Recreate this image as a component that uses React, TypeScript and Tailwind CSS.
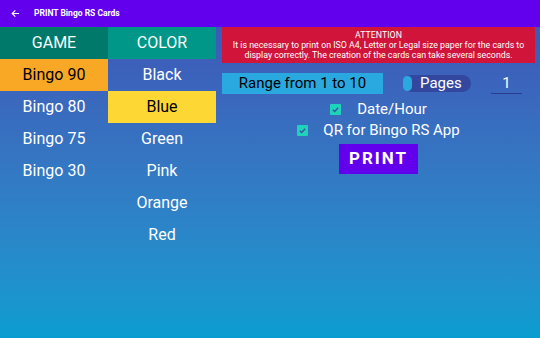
import React from "react";

const games = ["Bingo 90", "Bingo 80", "Bingo 75", "Bingo 30"];
const colors = ["Black", "Blue", "Green", "Pink", "Orange", "Red"];

function Check() {
  return (
    <div className="w-[11px] h-[11px] bg-[#1fd3b9] flex items-center justify-center rounded-[1px]">
      <svg width="9" height="9" viewBox="0 0 10 10">
        <path d="M2 5.2 L4.1 7.2 L8 3" stroke="#3b4fa8" strokeWidth="1.4" fill="none" />
      </svg>
    </div>
  );
}

export default function App() {
  return (
    <div
      className="w-[540px] h-[338px] flex flex-col bg-gradient-to-b from-[#3f51b5] to-[#079dd0] overflow-hidden"
      style={{ fontFamily: "Roboto, 'Noto Sans', sans-serif" }}
    >
      <div className="h-[27px] bg-[#6200ee] flex items-center shrink-0">
        <svg className="ml-[11px]" width="9" height="9" viewBox="0 0 10 10">
          <path d="M9 5 H1.5 M4.8 1.5 L1.3 5 L4.8 8.5" stroke="white" strokeWidth="1.3" fill="none" />
        </svg>
        <span className="ml-[14px] text-white font-bold text-[8.5px] leading-none">PRINT Bingo RS Cards</span>
      </div>
      <div className="flex flex-1">
        <div className="w-[108px] flex flex-col">
          <div className="h-[32px] bg-[#00796b] text-white text-[16px] flex items-center justify-center">GAME</div>
          {games.map((g, i) => (
            <div
              key={g}
              className={
                "h-[32px] text-[16px] flex items-center justify-center " +
                (i === 0 ? "bg-[#f9a825] text-black" : "text-white")
              }
            >
              {g}
            </div>
          ))}
        </div>
        <div className="w-[108px] flex flex-col">
          <div className="h-[32px] bg-[#009688] text-white text-[16px] flex items-center justify-center">COLOR</div>
          {colors.map((c, i) => (
            <div
              key={c}
              className={
                "h-[32px] text-[16px] flex items-center justify-center " +
                (i === 1 ? "bg-[#fdd835] text-black" : "text-white")
              }
            >
              {c}
            </div>
          ))}
        </div>
        <div className="ml-[6px] w-[313px] flex flex-col">
          <div className="h-[36px] bg-[#d11439] text-white text-[8.8px] leading-[10px] flex flex-col items-center justify-center text-center">
            <div>ATTENTION</div>
            <div className="whitespace-nowrap">It is necessary to print on ISO A4, Letter or Legal size paper for the cards to</div>
            <div className="whitespace-nowrap">display correctly. The creation of the cards can take several seconds.</div>
          </div>
          <div className="mt-[10px] h-[21px] flex items-center">
            <div className="w-[161px] h-[21px] bg-[#2aa8e0] text-black text-[15px] flex items-center justify-center">
              Range from 1 to 10
            </div>
            <div className="ml-[20px] w-[68px] h-[17px] rounded-full bg-[#34479f] flex items-center">
              <div className="w-[9px] h-[15px] rounded-full bg-[#2aa8e0]" />
              <span className="ml-[8px] text-white text-[15px] leading-none">Pages</span>
            </div>
            <div className="ml-[20px] w-[31px] h-[21px] border-b border-[#2c3d8f] text-white text-[15px] flex items-center justify-center">
              1
            </div>
          </div>
          <div className="mt-[4px] h-[22px] flex items-center justify-center">
            <Check />
            <span className="ml-[16px] text-white text-[15px]">Date/Hour</span>
          </div>
          <div className="h-[21px] flex items-center justify-center">
            <Check />
            <span className="ml-[15px] text-white text-[15px]">QR for Bingo RS App</span>
          </div>
          <div className="mt-[3px] flex justify-center">
            <div className="w-[79px] h-[30px] bg-[#6200ee] text-white font-bold text-[17px] tracking-[2px] flex items-center justify-center">
              PRINT
            </div>
          </div>
        </div>
      </div>
    </div>
  );
}
